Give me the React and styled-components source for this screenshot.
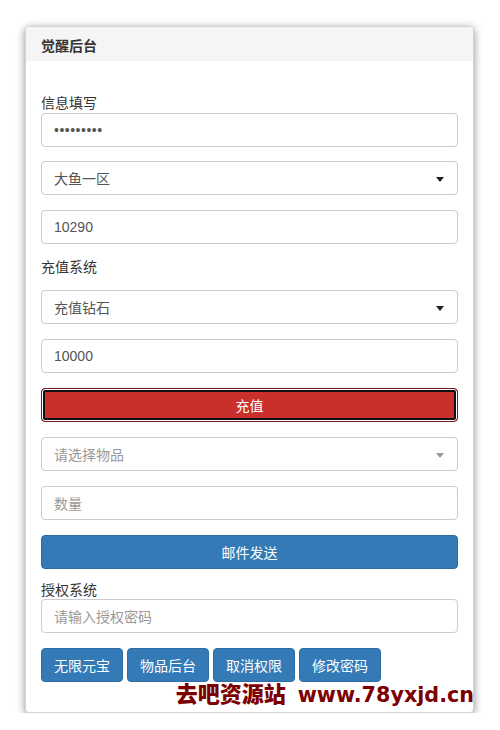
import React from "react"
import styled, { createGlobalStyle } from "styled-components"

const GlobalStyle = createGlobalStyle`
  body {
    margin: 0;
    background: #fff;
    font-family: "Liberation Sans", "Noto Sans CJK SC", sans-serif;
    font-size: 14px;
    color: #333;
  }
  * { box-sizing: border-box; }
`

const Page = styled.div`
  padding: 26px 0 0 25px;
`
const Panel = styled.div`
  position: relative;
  width: 449px;
  background: #fff;
  border: 1px solid #d4d4d4;
  border-radius: 4px;
  box-shadow: 0 2px 8px rgba(0, 0, 0, 0.45);
`
const Heading = styled.div`
  height: 34px;
  padding: 9px 15px 0;
  background: #f5f5f5;
  border-radius: 3px 3px 0 0;
  font-weight: bold;
  line-height: 20px;
  color: #333;
`
const Body = styled.div`
  display: flex;
  flex-direction: column;
  padding: 15px;
`
const Label = styled.div`
  line-height: ${(p) => p.$lh || 20}px;
  margin-top: ${(p) => p.$mt || 0}px;
  margin-bottom: ${(p) => p.$mb || 0}px;
  color: #333;
`
const Field = styled.div`
  position: relative;
  height: 34px;
  padding: 0 12px;
  margin-bottom: ${(p) => (p.$mb === undefined ? 15 : p.$mb)}px;
  border: 1px solid #ccc;
  border-radius: 4px;
  display: flex;
  align-items: center;
  color: ${(p) => (p.$placeholder ? "#999" : "#555")};
  letter-spacing: ${(p) => (p.$dots ? "0.5px" : "0")};
`
const Select = styled(Field)`
  &::after {
    content: "";
    position: absolute;
    right: 13px;
    top: 15px;
    border-left: 4px solid transparent;
    border-right: 4px solid transparent;
    border-top: 5px solid ${(p) => (p.$placeholder ? "#999" : "#222")};
  }
`
const WideButton = styled.div`
  height: 34px;
  margin-bottom: ${(p) => p.$mb || 0}px;
  border-radius: 4px;
  display: flex;
  align-items: center;
  justify-content: center;
  color: #fff;
  background: ${(p) => (p.$danger ? "#c9302c" : "#337ab7")};
  border: 1px solid ${(p) => (p.$danger ? "#761c19" : "#2e6da4")};
  box-shadow: ${(p) =>
    p.$danger ? "inset 0 0 0 1px #fff, inset 0 0 0 3px #111" : "none"};
`
const ButtonRow = styled.div`
  display: flex;
  gap: 4px;
  margin-bottom: 15px;
`
const SmallButton = styled.div`
  height: 34px;
  padding: 0 12px;
  display: flex;
  align-items: center;
  color: #fff;
  background: #337ab7;
  border: 1px solid #2e6da4;
  border-radius: 4px;
`
const Watermark = styled.div`
  position: absolute;
  right: -1px;
  top: 653px;
  display: flex;
  align-items: baseline;
  gap: 12px;
  color: #7d0000;
  line-height: 24px;
  white-space: nowrap;
`
const MarkCn = styled.span`
  font-family: "Noto Sans CJK SC", sans-serif;
  font-weight: 900;
  font-size: 22px;
`
const MarkUrl = styled.span`
  font-family: "DejaVu Sans", sans-serif;
  font-weight: bold;
  font-size: 20.7px;
`

const App = () => (
  <>
    <GlobalStyle />
    <Page>
      <Panel>
        <Heading>觉醒后台</Heading>
        <Body>
          <Label $mt={17}>信息填写</Label>
          <Field $mb={14} $dots>•••••••••</Field>
          <Select>大鱼一区</Select>
          <Field $mb={13}>10290</Field>
          <Label $mb={13}>充值系统</Label>
          <Select>充值钻石</Select>
          <Field>10000</Field>
          <WideButton $danger $mb={15}>充值</WideButton>
          <Select $placeholder>请选择物品</Select>
          <Field $placeholder>数量</Field>
          <WideButton $mb={12}>邮件发送</WideButton>
          <Label $lh={18}>授权系统</Label>
          <Field $placeholder>请输入授权密码</Field>
          <ButtonRow>
            <SmallButton>无限元宝</SmallButton>
            <SmallButton>物品后台</SmallButton>
            <SmallButton>取消权限</SmallButton>
            <SmallButton>修改密码</SmallButton>
          </ButtonRow>
        </Body>
        <Watermark>
          <MarkCn>去吧资源站</MarkCn>
          <MarkUrl>www.78yxjd.cn</MarkUrl>
        </Watermark>
      </Panel>
    </Page>
  </>
)

export default App
